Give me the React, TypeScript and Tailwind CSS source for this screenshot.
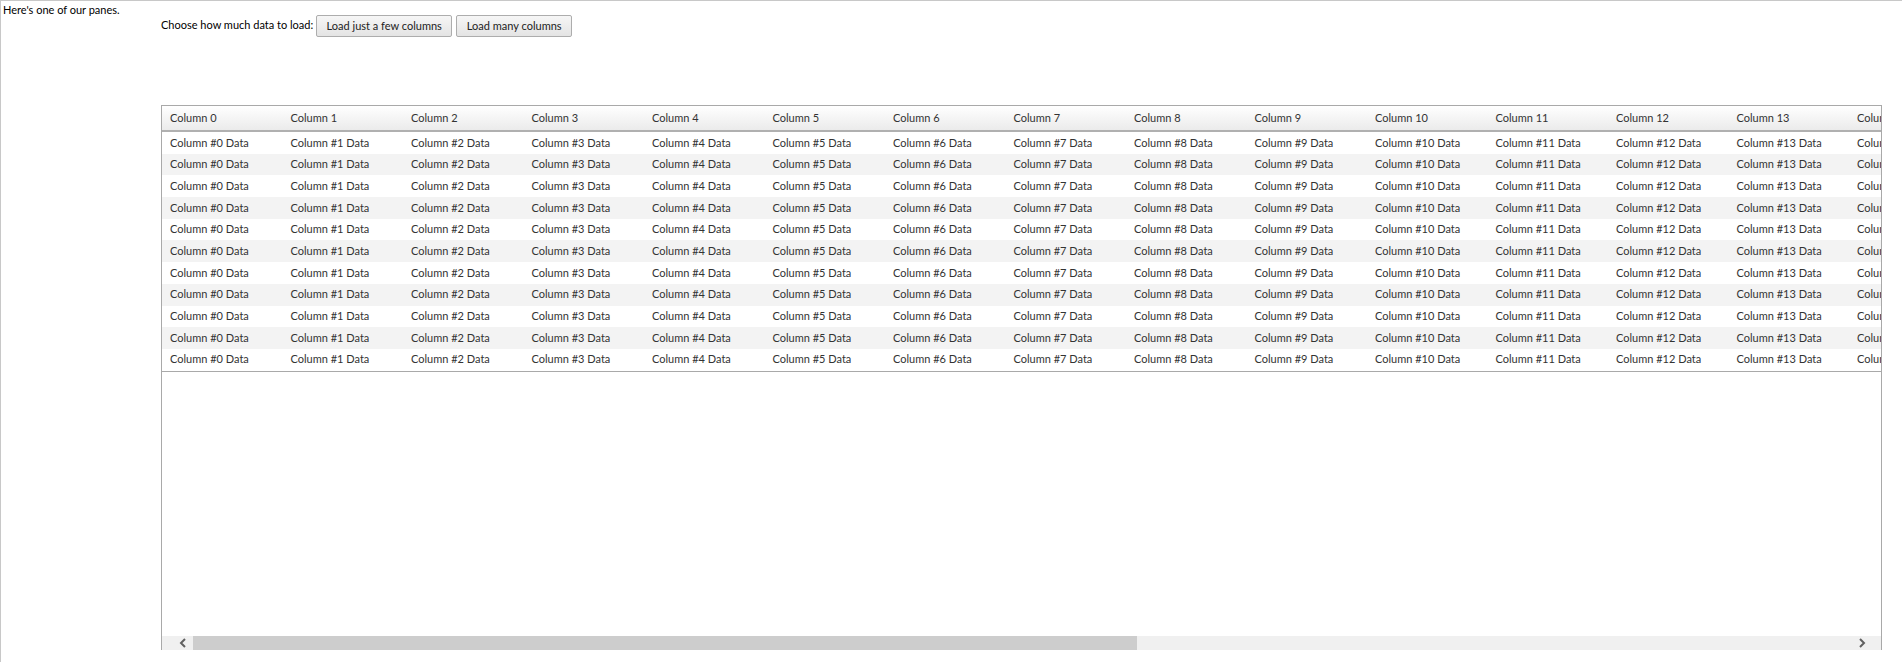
const COLS = Array.from({ length: 15 }, (_, i) => i);
const ROWS = Array.from({ length: 11 }, (_, i) => i);

function Chevron({ dir }: { dir: "left" | "right" }) {
  return (
    <svg width="8" height="10" viewBox="0 0 8 10" className="text-[#606060]">
      <path
        d={dir === "left" ? "M6 1 L2 5 L6 9" : "M2 1 L6 5 L2 9"}
        fill="none"
        stroke="currentColor"
        strokeWidth="2"
      />
    </svg>
  );
}

export default function App() {
  return (
    <div
      className="h-[662px] w-[1902px] overflow-hidden border-t border-l border-[#c8c8c8] bg-white text-[11px] text-black flex"
      style={{ fontFamily: 'Lato, "Liberation Sans", sans-serif' }}
    >
      <div className="w-[160px] shrink-0 pl-[2px] pt-[2px] leading-[14px]">
        Here's one of our panes.
      </div>

      <div className="flex flex-col">
        <div className="flex items-center h-[24px] mt-[13px]">
          <span className="leading-[14px] -mt-[2px] mr-[3px]">Choose how much data to load:</span>
          <button className="h-[22px] w-[136px] mr-[4px] border border-[#adadad] rounded-[2px] bg-gradient-to-b from-[#f6f6f6] to-[#e4e4e4] text-[#222]">
            Load just a few columns
          </button>
          <button className="h-[22px] w-[116px] border border-[#adadad] rounded-[2px] bg-gradient-to-b from-[#f6f6f6] to-[#e4e4e4] text-[#222]">
            Load many columns
          </button>
        </div>

        <div className="mt-[67px] w-[1721px] h-[545px] border-t border-l border-r border-[#a9a9a9] flex flex-col overflow-hidden">
          <div className="h-[26px] shrink-0 flex bg-gradient-to-b from-white to-[#ebebeb] border-b-2 border-[#b0b0b0] text-[#333]">
            {COLS.map((c) => (
              <div key={c} className="w-[120.5px] shrink-0 pl-[8px] flex items-center whitespace-nowrap overflow-hidden">
                Column {c}
              </div>
            ))}
          </div>

          <div className="border-b border-[#a9a9a9] shrink-0">
            {ROWS.map((r) => (
              <div
                key={r}
                className={`h-[21.7px] flex items-center text-[#333] ${r % 2 === 1 ? "bg-[#f3f3f3]" : "bg-white"}`}
              >
                {COLS.map((c) => (
                  <div key={c} className="w-[120.5px] shrink-0 pl-[8px] whitespace-nowrap overflow-hidden">
                    Column #{c} Data
                  </div>
                ))}
              </div>
            ))}
          </div>

          <div className="flex-1" />

          <div className="h-[14px] shrink-0 flex items-center bg-[#f0f0f0]">
            <div className="w-[31px] h-full flex items-center justify-center pl-[10px]">
              <Chevron dir="left" />
            </div>
            <div className="w-[944px] h-full bg-[#cdcdcd]" />
            <div className="flex-1" />
            <div className="w-[31px] h-full flex items-center justify-center pr-[8px]">
              <Chevron dir="right" />
            </div>
          </div>
        </div>
      </div>
    </div>
  );
}
